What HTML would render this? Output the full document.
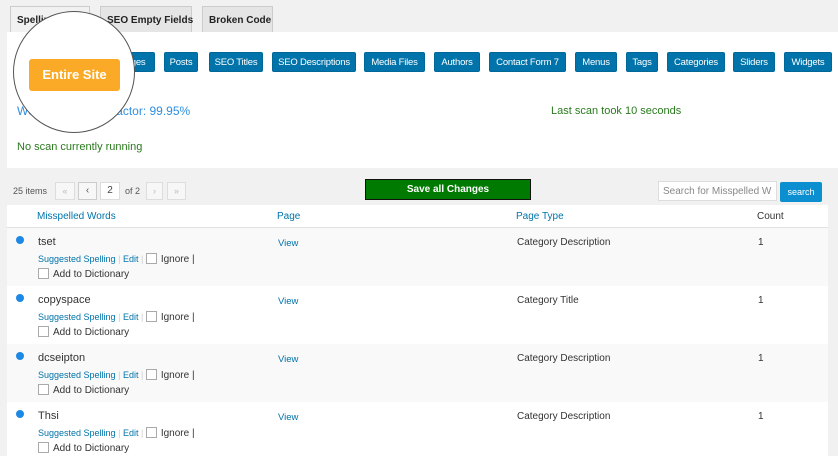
<!DOCTYPE html>
<html><head><meta charset="utf-8"><style>
*{margin:0;padding:0;box-sizing:border-box}
body{width:838px;height:456px;background:#f1f1f1;font-family:"Liberation Sans",sans-serif;position:relative;overflow:hidden;color:#444}
.a{position:absolute;white-space:nowrap}
.tab{position:absolute;top:6px;height:27px;border:1px solid #ccc;border-bottom:none;background:#e5e5e5;font-size:10px;font-weight:bold;color:#222;padding:8px 6px 0;white-space:nowrap}
.btn{position:absolute;top:52px;height:20px;background:#0073aa;border:1px solid #006799;border-radius:2px;color:#fff;font-size:9.5px;display:flex;align-items:center;justify-content:center;white-space:nowrap;letter-spacing:-0.2px}
.row{position:absolute;left:7px;width:821px;height:58px}
.cb{display:inline-block;width:11px;height:11px;border:1px solid #aaa;background:#fff;vertical-align:-2px;margin-right:4px}
.lnk{color:#0073aa}
.s{font-size:10px;color:#333}
</style></head><body>
<div class="tab" style="left:10px;width:80px;background:#f1f1f1;height:28px">Spelling</div>
<div class="tab" style="left:100px;width:92px">SEO Empty Fields</div>
<div class="tab" style="left:202px;width:71px">Broken Code</div>
<div class="a" style="left:7px;top:32px;width:831px;height:136px;background:#fff"></div>
<div class="btn" style="left:110px;width:45px">Pages</div>
<div class="btn" style="left:164px;width:34px">Posts</div>
<div class="btn" style="left:209px;width:54px">SEO Titles</div>
<div class="btn" style="left:272px;width:84px">SEO Descriptions</div>
<div class="btn" style="left:364px;width:61px">Media Files</div>
<div class="btn" style="left:434px;width:46px">Authors</div>
<div class="btn" style="left:489px;width:77px">Contact Form 7</div>
<div class="btn" style="left:575px;width:42px">Menus</div>
<div class="btn" style="left:626px;width:32px">Tags</div>
<div class="btn" style="left:667px;width:58px">Categories</div>
<div class="btn" style="left:733px;width:42px">Sliders</div>
<div class="btn" style="left:784px;width:48px">Widgets</div>
<div class="a" style="left:17px;top:104px;font-size:12px;color:#2e8fe0">Website Literacy Factor: 99.95%</div>
<div class="a" style="left:551px;top:105px;font-size:11px;color:#2a7a1e">Last scan took 10 seconds</div>
<div class="a" style="left:17px;top:141px;font-size:11px;color:#2a7a1e">No scan currently running</div>
<div class="a" style="left:13px;top:11px;width:122px;height:122px;border-radius:50%;background:#fff;border:1px solid #555"></div>
<div class="a" style="left:29px;top:59px;width:91px;height:32px;background:#fbaa27;border-radius:3px;color:#fff;font-weight:bold;font-size:13px;text-align:center;line-height:32px">Entire Site</div>

<div class="a" style="left:13px;top:186px;font-size:9px;color:#555">25 items</div>
<div class="a" style="left:55px;top:182px;width:20px;height:18px;border:1px solid #ddd;background:#f7f7f7;font-size:9px;color:#bbb;text-align:center;line-height:16px">«</div>
<div class="a" style="left:78px;top:182px;width:19px;height:18px;border:1px solid #ccc;background:#f7f7f7;font-size:10px;color:#555;text-align:center;line-height:16px">‹</div>
<div class="a" style="left:100px;top:182px;width:20px;height:18px;border:1px solid #ddd;background:#fff;font-size:10px;color:#444;text-align:center;line-height:16px">2</div>
<div class="a" style="left:125px;top:186px;font-size:9px;color:#555">of 2</div>
<div class="a" style="left:146px;top:182px;width:17px;height:18px;border:1px solid #ddd;background:#f7f7f7;font-size:9px;color:#bbb;text-align:center;line-height:16px">›</div>
<div class="a" style="left:167px;top:182px;width:19px;height:18px;border:1px solid #ddd;background:#f7f7f7;font-size:9px;color:#bbb;text-align:center;line-height:16px">»</div>
<div class="a" style="left:365px;top:179px;width:166px;height:21px;background:#007a00;border:1px solid #111;color:#fff;font-weight:bold;font-size:10px;text-align:center;line-height:19px">Save all Changes</div>
<div class="a" style="left:658px;top:181px;width:119px;height:20px;border:1px solid #ddd;background:#fff;font-size:10px;color:#888;padding:4px 4px;overflow:hidden">Search for Misspelled W</div>
<div class="a" style="left:780px;top:182px;width:42px;height:20px;background:#0b8fd0;border-radius:2px;color:#fff;font-size:9px;text-align:center;line-height:20px">search</div>

<div class="row" style="top:205px;height:23px;background:#fff;border-bottom:1px solid #e1e1e1"></div>
<div class="a lnk" style="left:37px;top:211px;font-size:10px">Misspelled Words</div>
<div class="a lnk" style="left:277px;top:211px;font-size:10px">Page</div>
<div class="a lnk" style="left:516px;top:211px;font-size:10px">Page Type</div>
<div class="a" style="left:757px;top:211px;font-size:10px;color:#333">Count</div>

<div class="row" style="top:228px;background:#f9f9f9"></div>
<div class="row" style="top:286px;background:#fff"></div>
<div class="row" style="top:344px;background:#f9f9f9"></div>
<div class="row" style="top:402px;background:#fff;height:54px"></div>

<div class="a" style="left:0;top:228px;width:838px">
<div class="a" style="left:16px;top:8px;width:8px;height:8px;border-radius:50%;background:#1e88e5"></div>
<div class="a" style="left:38px;top:8px;font-size:11px;color:#333">tset</div>
<div class="a" style="left:38px;top:25px;font-size:9px"><span class="lnk">Suggested Spelling</span> <span style="color:#ccc">|</span> <span class="lnk">Edit</span> <span style="color:#ccc">|</span> <span class="cb"></span><span class="s">Ignore |</span></div>
<div class="a" style="left:38px;top:40px;font-size:9px"><span class="cb"></span><span class="s">Add to Dictionary</span></div>
<div class="a lnk" style="left:278px;top:10px;font-size:9.5px">View</div>
<div class="a s" style="left:517px;top:9px">Category Description</div>
<div class="a s" style="left:758px;top:9px">1</div>
</div>
<div class="a" style="left:0;top:286px;width:838px">
<div class="a" style="left:16px;top:8px;width:8px;height:8px;border-radius:50%;background:#1e88e5"></div>
<div class="a" style="left:38px;top:8px;font-size:11px;color:#333">copyspace</div>
<div class="a" style="left:38px;top:25px;font-size:9px"><span class="lnk">Suggested Spelling</span> <span style="color:#ccc">|</span> <span class="lnk">Edit</span> <span style="color:#ccc">|</span> <span class="cb"></span><span class="s">Ignore |</span></div>
<div class="a" style="left:38px;top:40px;font-size:9px"><span class="cb"></span><span class="s">Add to Dictionary</span></div>
<div class="a lnk" style="left:278px;top:10px;font-size:9.5px">View</div>
<div class="a s" style="left:517px;top:9px">Category Title</div>
<div class="a s" style="left:758px;top:9px">1</div>
</div>
<div class="a" style="left:0;top:344px;width:838px">
<div class="a" style="left:16px;top:8px;width:8px;height:8px;border-radius:50%;background:#1e88e5"></div>
<div class="a" style="left:38px;top:8px;font-size:11px;color:#333">dcseipton</div>
<div class="a" style="left:38px;top:25px;font-size:9px"><span class="lnk">Suggested Spelling</span> <span style="color:#ccc">|</span> <span class="lnk">Edit</span> <span style="color:#ccc">|</span> <span class="cb"></span><span class="s">Ignore |</span></div>
<div class="a" style="left:38px;top:40px;font-size:9px"><span class="cb"></span><span class="s">Add to Dictionary</span></div>
<div class="a lnk" style="left:278px;top:10px;font-size:9.5px">View</div>
<div class="a s" style="left:517px;top:9px">Category Description</div>
<div class="a s" style="left:758px;top:9px">1</div>
</div>
<div class="a" style="left:0;top:402px;width:838px">
<div class="a" style="left:16px;top:8px;width:8px;height:8px;border-radius:50%;background:#1e88e5"></div>
<div class="a" style="left:38px;top:8px;font-size:11px;color:#333">Thsi</div>
<div class="a" style="left:38px;top:25px;font-size:9px"><span class="lnk">Suggested Spelling</span> <span style="color:#ccc">|</span> <span class="lnk">Edit</span> <span style="color:#ccc">|</span> <span class="cb"></span><span class="s">Ignore |</span></div>
<div class="a" style="left:38px;top:40px;font-size:9px"><span class="cb"></span><span class="s">Add to Dictionary</span></div>
<div class="a lnk" style="left:278px;top:10px;font-size:9.5px">View</div>
<div class="a s" style="left:517px;top:9px">Category Description</div>
<div class="a s" style="left:758px;top:9px">1</div>
</div>
</body></html>
